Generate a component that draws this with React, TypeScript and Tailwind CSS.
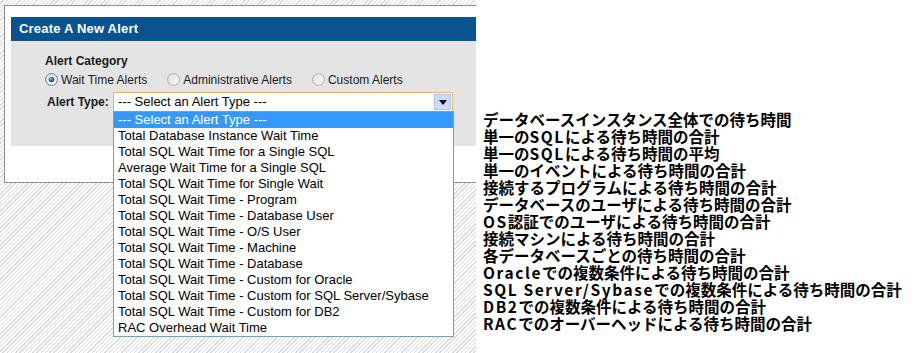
import React from "react";

const options = [
  "Total Database Instance Wait Time",
  "Total SQL Wait Time for a Single SQL",
  "Average Wait Time for a Single SQL",
  "Total SQL Wait Time for Single Wait",
  "Total SQL Wait Time - Program",
  "Total SQL Wait Time - Database User",
  "Total SQL Wait Time - O/S User",
  "Total SQL Wait Time - Machine",
  "Total SQL Wait Time - Database",
  "Total SQL Wait Time - Custom for Oracle",
  "Total SQL Wait Time - Custom for SQL Server/Sybase",
  "Total SQL Wait Time - Custom for DB2",
  "RAC Overhead Wait Time",
];

const jp = [
  "データベースインスタンス全体での待ち時間",
  "単一のSQLによる待ち時間の合計",
  "単一のSQLによる待ち時間の平均",
  "単一のイベントによる待ち時間の合計",
  "接続するプログラムによる待ち時間の合計",
  "データベースのユーザによる待ち時間の合計",
  "OS認証でのユーザによる待ち時間の合計",
  "接続マシンによる待ち時間の合計",
  "各データベースごとの待ち時間の合計",
  "Oracleでの複数条件による待ち時間の合計",
  "SQL Server/Sybaseでの複数条件による待ち時間の合計",
  "DB2での複数条件による待ち時間の合計",
  "RACでのオーバーヘッドによる待ち時間の合計",
];

function JpLine({ text }: { text: string }) {
  const parts = text.split(/([A-Za-z0-9 /]+)/).filter((p) => p.length > 0);
  return (
    <div className="h-[17px]">
      {parts.map((p, i) =>
        /^[A-Za-z0-9 /]+$/.test(p) ? (
          <span key={i} className="tracking-[1.6px]">{p}</span>
        ) : (
          <span key={i}>{p}</span>
        )
      )}
    </div>
  );
}

function Radio({ checked }: { checked?: boolean }) {
  return (
    <svg width="13" height="13" viewBox="0 0 13 13" className="shrink-0">
      <defs>
        <linearGradient id={checked ? "rgc" : "rgu"} x1="0" y1="0" x2="1" y2="1">
          <stop offset="0" stopColor="#dcdcd6" />
          <stop offset="1" stopColor="#ffffff" />
        </linearGradient>
        <radialGradient id="dot" cx="0.4" cy="0.35" r="0.7">
          <stop offset="0" stopColor="#9fd0f2" />
          <stop offset="0.5" stopColor="#2b6aa6" />
          <stop offset="1" stopColor="#16406c" />
        </radialGradient>
      </defs>
      <circle cx="6.5" cy="6.5" r="5.9" fill={`url(#${checked ? "rgc" : "rgu"})`} stroke={checked ? "#6a7b8c" : "#a8aeb5"} strokeWidth="1" />
      {checked && <circle cx="6.5" cy="6.5" r="2.8" fill="url(#dot)" />}
    </svg>
  );
}

export default function App() {
  return (
    <div className="flex w-[914px] h-[353px] bg-white font-['Liberation_Sans',Arial,sans-serif] text-black overflow-hidden">
      <div className="relative w-[476px] h-[353px] shrink-0 overflow-hidden bg-[repeating-linear-gradient(135deg,#ffffff_0px,#ffffff_2px,#d9d9d9_2px,#d9d9d9_3px)] pt-[5px] pl-[4px]">
        <div className="w-[490px] h-[178px] bg-white border border-[#8e8e8e] pt-[11px] pl-[6px]">
          <div className="h-[24px] bg-[#0a5391] text-white font-bold text-[13px] leading-[24px] pl-[8px] tracking-[0.2px]">
            Create A New Alert
          </div>
          <div className="h-[105px] bg-[#e4e4e4] pl-[34px] pt-[13px]">
            <div className="text-[12px] font-bold leading-[14px] text-[#1a1a1a]">Alert Category</div>
            <div className="flex items-center h-[17px] mt-[3px] text-[12px] text-[#1a1a1a]">
              <Radio checked />
              <span className="ml-[3px]">Wait Time Alerts</span>
              <span className="ml-[20px]"><Radio /></span>
              <span className="ml-[3px]">Administrative Alerts</span>
              <span className="ml-[20px]"><Radio /></span>
              <span className="ml-[3px]">Custom Alerts</span>
            </div>
            <div className="flex items-center mt-[4px]">
              <span className="text-[12px] font-bold ml-[2px] w-[66px] text-[#1a1a1a]">Alert Type:</span>
              <div className="relative flex items-center w-[340px] h-[20px] bg-white border border-[#e2b862] pl-[4px] text-[13px]">
                <span>--- Select an Alert Type ---</span>
                <div className="absolute right-[1px] top-[1px] w-[17px] h-[16px] bg-[#c9dcf6] border border-[#aec4e6] flex items-center justify-center">
                  <svg width="8" height="5" viewBox="0 0 8 5"><path d="M0 0H8L4 5Z" fill="#000" /></svg>
                </div>
              </div>
            </div>
          </div>
        </div>
        <div className="absolute left-[113px] top-[111px] w-[341px] bg-white border border-[#7f9db9] text-[13px] leading-[16px]">
          <div className="bg-[#3399ff] text-white pl-[4px] h-[16px]">--- Select an Alert Type ---</div>
          {options.map((o) => (
            <div key={o} className="pl-[4px] h-[16px] whitespace-nowrap">{o}</div>
          ))}
        </div>
      </div>
      <div className="flex-1 bg-white pt-[111px] pl-[7px] font-['Noto_Sans_CJK_JP',sans-serif] font-bold text-[15.5px] leading-[17px] whitespace-nowrap">
        {jp.map((t) => (
          <JpLine key={t} text={t} />
        ))}
      </div>
    </div>
  );
}
